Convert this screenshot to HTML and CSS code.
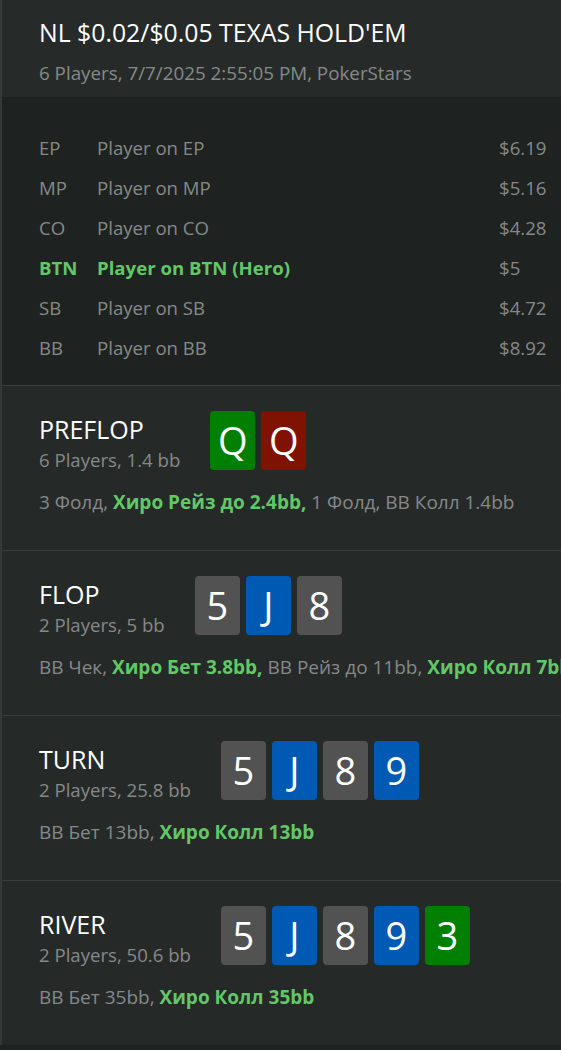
FILE: index.html
```html
<!DOCTYPE html>
<html lang="ru">
<head>
<meta charset="utf-8">
<title>Hand history</title>
<link rel="stylesheet" href="styles.css">
</head>
<body>
<div class="hand">
  <header class="hand-head">
    <h1 class="hand-title">NL $0.02/$0.05 TEXAS HOLD'EM</h1>
    <div class="hand-meta">6 Players, 7/7/2025 2:55:05 PM, PokerStars</div>
  </header>

  <section class="seats">
    <div class="seat"><span class="pos">EP</span><span class="name">Player on EP</span><span class="stack">$6.19</span></div>
    <div class="seat"><span class="pos">MP</span><span class="name">Player on MP</span><span class="stack">$5.16</span></div>
    <div class="seat"><span class="pos">CO</span><span class="name">Player on CO</span><span class="stack">$4.28</span></div>
    <div class="seat hero"><span class="pos">BTN</span><span class="name">Player on BTN (Hero)</span><span class="stack">$5</span></div>
    <div class="seat"><span class="pos">SB</span><span class="name">Player on SB</span><span class="stack">$4.72</span></div>
    <div class="seat"><span class="pos">BB</span><span class="name">Player on BB</span><span class="stack">$8.92</span></div>
  </section>

  <section class="street">
    <div class="street-top">
      <div class="street-info">
        <div class="street-name">PREFLOP</div>
        <div class="street-meta">6 Players, 1.4 bb</div>
      </div>
      <div class="cards">
        <span class="card club">Q</span><span class="card heart">Q</span>
      </div>
    </div>
    <div class="actions">3 Фолд, <b class="hero-act">Хиро Рейз до 2.4bb,</b> 1 Фолд, BB Колл 1.4bb</div>
  </section>

  <section class="street">
    <div class="street-top">
      <div class="street-info">
        <div class="street-name">FLOP</div>
        <div class="street-meta">2 Players, 5 bb</div>
      </div>
      <div class="cards">
        <span class="card spade">5</span><span class="card diamond">J</span><span class="card spade">8</span>
      </div>
    </div>
    <div class="actions">BB Чек, <b class="hero-act">Хиро Бет 3.8bb,</b> BB Рейз до 11bb, <b class="hero-act">Хиро Колл 7bb</b></div>
  </section>

  <section class="street">
    <div class="street-top">
      <div class="street-info">
        <div class="street-name">TURN</div>
        <div class="street-meta">2 Players, 25.8 bb</div>
      </div>
      <div class="cards">
        <span class="card spade">5</span><span class="card diamond">J</span><span class="card spade">8</span><span class="card diamond">9</span>
      </div>
    </div>
    <div class="actions">BB Бет 13bb, <b class="hero-act">Хиро Колл 13bb</b></div>
  </section>

  <section class="street">
    <div class="street-top">
      <div class="street-info">
        <div class="street-name">RIVER</div>
        <div class="street-meta">2 Players, 50.6 bb</div>
      </div>
      <div class="cards">
        <span class="card spade">5</span><span class="card diamond">J</span><span class="card spade">8</span><span class="card diamond">9</span><span class="card club">3</span>
      </div>
    </div>
    <div class="actions">BB Бет 35bb, <b class="hero-act">Хиро Колл 35bb</b></div>
  </section>
</div>
</body>
</html>
```

FILE: styles.css
```css
* { box-sizing: border-box; }

html, body {
  margin: 0;
  padding: 0;
  background: #1e2220;
}

body {
  font-family: "Open Sans", "Noto Sans", sans-serif;
  color: #888d8c;
  overflow: hidden;
}

.hand {
  border-left: 2px solid #353938;
  width: 561px;
}

.hand-head {
  background: #262a29;
  padding: 16px 0 10px 37px;
  height: 97px;
}

.hand-title {
  margin: 0 0 12px;
  font-size: 24.8px;
  line-height: 32px;
  font-weight: 400;
  color: #ffffff;
  white-space: nowrap;
}

.hand-meta {
  font-size: 18.8px;
  line-height: 26px;
  color: #858a89;
  white-space: nowrap;
}

.seats {
  background: #1e2220;
  padding: 38px 0 0 37px;
  height: 289px;
  border-bottom: 1px solid #3a3e3d;
  display: flex;
  flex-direction: column;
  gap: 14px;
}

.seat {
  display: grid;
  grid-template-columns: 58px 402px auto;
  font-size: 18.6px;
  line-height: 26px;
  color: #858a89;
  white-space: nowrap;
}

.seat.hero .pos,
.seat.hero .name {
  color: #62c767;
  font-weight: 700;
}

.street {
  background: #252928;
  height: 165px;
  padding: 25px 0 0 37px;
  border-bottom: 1px solid #3a3e3d;
  overflow: hidden;
}

.street:last-child {
  border-bottom: none;
  height: 164px;
}

.street-top {
  display: flex;
  align-items: flex-start;
  gap: 30px;
}

.street-info {
  padding-top: 2px;
}

.street-name {
  font-size: 25px;
  line-height: 32px;
  color: #ffffff;
  white-space: nowrap;
}

.street-meta {
  margin-top: 2px;
  font-size: 18.6px;
  line-height: 26px;
  color: #858a89;
  white-space: nowrap;
}

.cards {
  display: flex;
  gap: 6px;
}

.card {
  width: 45px;
  height: 59px;
  border-radius: 4px;
  display: flex;
  align-items: center;
  justify-content: center;
  color: #ffffff;
  font-size: 38px;
  line-height: 1;
  padding-bottom: 2px;
}

.card.spade { background: #525252; }
.card.diamond { background: #0059b3; }
.card.club { background: #007f00; }
.card.heart { background: #7f1200; }

.actions {
  margin-top: 16px;
  font-size: 19px;
  line-height: 26px;
  color: #858a89;
  white-space: nowrap;
  overflow: hidden;
}

.hero-act {
  color: #62c767;
  font-weight: 700;
}
```
